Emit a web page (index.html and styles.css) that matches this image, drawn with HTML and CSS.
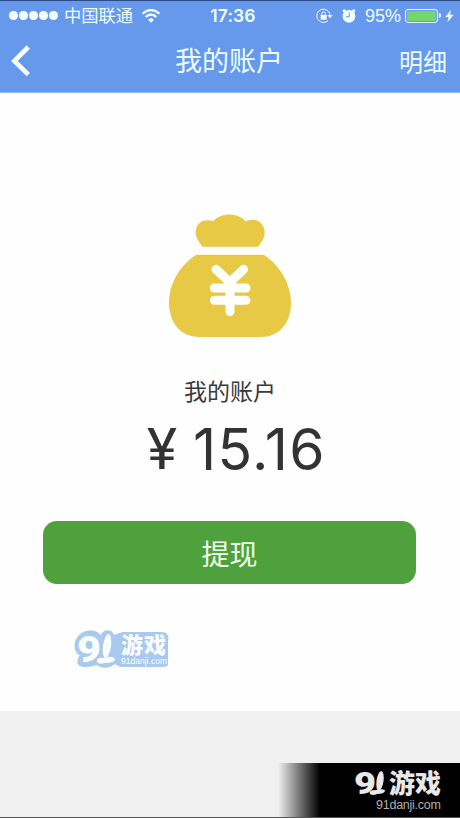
FILE: index.html
```html
<!DOCTYPE html>
<html lang="zh-CN">
<head>
<meta charset="utf-8">
<title>我的账户</title>
<link rel="stylesheet" href="styles.css">
</head>
<body>
<div class="screen">
  <header class="header">
    <div class="status">
      <div class="status-left">
        <span class="dots"><i></i><i></i><i></i><i></i><i></i></span>
        <span class="carrier">中国联通</span>
        <svg class="wifi" width="18" height="14" viewBox="0 0 54 42" fill="none" stroke="#f4ffff" stroke-width="7">
          <path d="M2 14Q27-8 52 14"/><path d="M11 24Q27 9 43 24"/><path d="M18 32Q27 23 36 32L27 41Z" fill="#f4ffff" stroke="none"/>
        </svg>
      </div>
      <span class="time">17:36</span>
      <div class="status-right">
        <svg width="17" height="16" viewBox="0 0 51 48" fill="none" stroke="#f4ffff" stroke-width="3">
          <path d="M36 38A20 20 0 1 1 42 20"/><path d="M34 21h16l-8 10z" fill="#f4ffff" stroke="none"/>
          <rect x="14" y="21" width="18" height="14" fill="#f4ffff" stroke="none"/><path d="M17.500 22v-5a5.500 5.500 0 0 1 11 0v5"/>
        </svg>
        <svg class="alarm" width="14" height="16" viewBox="0 0 42 48">
          <g fill="#f4ffff"><circle cx="21" cy="25" r="19"/><circle cx="7" cy="9" r="5"/><circle cx="35" cy="9" r="5"/></g>
          <path d="M22 14v12h-10" fill="none" stroke="#6699ec" stroke-width="3"/>
        </svg>
        <span class="percent">95%</span>
        <span class="battery"><i></i></span><span class="battery-tip"></span>
        <svg class="bolt" width="9" height="14" viewBox="0 0 27 42"><path d="M18 2L1 24h10L7 40 26 17H15z" fill="#f4ffff"/></svg>
      </div>
    </div>
    <nav class="nav">
      <svg class="back" width="20" height="32" viewBox="0 0 60 96" fill="none" stroke="#f8ffff" stroke-width="14"><path d="M52 6L10 48l42 41"/></svg>
      <h1>我的账户</h1>
      <a class="detail">明细</a>
    </nav>
  </header>
  <main class="account">
    <svg class="bag" width="160" height="150" viewBox="0 0 480 450">
      <g fill="#e7c945">
        <path d="M157 140C142 119 137 108 137 96C137 68 163 53 190 64C213 37 264 37 287 64C315 50 344 68 344 96C344 112 338 124 324 140Z"/>
        <path d="M139 164H341C391 196 423 254 423 309C423 371 386 411 332 411H148C91 411 57 369 57 307C57 252 89 195 139 164Z"/>
      </g>
      <path d="M198 208L240 247L281 208M193 264H288M193 301H288M240 244V335" fill="none" stroke="#fffffb" stroke-width="27" stroke-linecap="round"/>
    </svg>
    <p class="label">我的账户</p>
    <p class="amount"><span class="yen">¥</span><span class="sum">15.16</span></p>
    <button class="withdraw">提现</button>
  </main>
  <footer class="bottom"></footer>
  <div class="stamp">
    <svg width="104" height="48" viewBox="0 0 104 48">
      <path class="stamp-back" d="M16 6C25 4 29 8 31 11Q34 3 41 6L44 10L53 7H91Q99 7 97 15V38Q97 40 93 40H51L45 37Q35 44 27 38Q13 42 9 38Q7 35 11 29Q4 26 6 16Q8 9 16 6Z"/>
      <g class="stamp-face">
        <text class="nine" x="7" y="36" textLength="24" lengthAdjust="spacingAndGlyphs">9</text>
        <ellipse cx="37" cy="20" rx="4" ry="12" transform="rotate(8 37 20)"/><path d="M27 36Q26 31 34 32Q43 29 45 33Q45 37 35 37Q29 39 27 36Z"/>
        <text class="game" x="51" y="27" textLength="45">游戏</text>
        <text class="site" x="51" y="38" textLength="46" lengthAdjust="spacingAndGlyphs">91danji.com</text>
      </g>
    </svg>
  </div>
  <div class="brand">
    <svg width="184" height="54" viewBox="0 0 184 54">
      <g fill="#e8e8e8">
        <text class="brand-nine" x="78" y="31" textLength="22" lengthAdjust="spacingAndGlyphs">9</text>
        <ellipse cx="104" cy="18" rx="3.500" ry="10" transform="rotate(8 104 18)"/>
        <path d="M94 31Q92 27 100 27Q109 25 109 28Q108 31 101 31Q97 33 94 31Z"/>
        <text class="brand-game" x="113" y="30" textLength="52">游戏</text>
      </g>
      <text class="brand-site" x="100" y="46" textLength="65">91danji.com</text>
    </svg>
  </div>
</div>
</body>
</html>
```
FILE: styles.css
```css
* { box-sizing: border-box; }
body {
  margin: 0;
  font-family: "Liberation Sans", "Noto Sans CJK SC", sans-serif;
}
.screen {
  position: relative;
  display: flex;
  flex-direction: column;
  width: 460px;
  height: 818px;
  overflow: hidden;
  background: #fefefe;
}
.header {
  height: 93px;
  background: #6699ec;
  border-top: 1px solid #2c4a86;
  border-bottom: 1px solid #94b8ed;
  color: #ecfdff;
}
.status {
  display: grid;
  grid-template-columns: 1fr auto 1fr;
  align-items: center;
  height: 29px;
  padding: 0 6px 0 9px;
}
.status-left, .status-right, .dots { display: flex; align-items: center; }
.status-right { justify-content: flex-end; }
.dots { gap: 1.5px; }
.dots i { width: 8.6px; height: 8.6px; border-radius: 50%; background: #f4ffff; }
.carrier { margin-left: 6px; padding-top: 1px; font-size: 17.3px; line-height: 28px; font-weight: 400; }
.wifi { margin-left: 9px; }
.time { padding-left: 3px; font: 600 17.5px/28px Inter, sans-serif; letter-spacing: .1px; }
.alarm { margin-left: 9px; }
.percent { margin-left: 9px; font: 400 18px/28px "Liberation Sans", sans-serif; }
.battery { width: 33px; height: 14px; margin-left: 4px; padding: 1px; border: 1px solid #e9ffff; border-radius: 3px; }
.battery i { display: block; width: 29px; height: 10px; border-radius: 1px; background: #73d56c; }
.battery-tip { width: 2px; height: 5px; margin-left: 1px; background: #e9ffff; border-radius: 0 2px 2px 0; }
.bolt { margin-left: 4px; }
.nav {
  display: grid;
  grid-template-columns: 1fr auto 1fr;
  align-items: center;
  height: 62px;
  padding: 0 13px 0 11px;
}
.nav h1 { margin: 0; padding-top: 2px; font-size: 27px; line-height: 40px; font-weight: 400; }
.detail { justify-self: end; padding-top: 4px; font-size: 24px; line-height: 38px; font-weight: 400; }
.account {
  display: flex;
  flex-direction: column;
  align-items: center;
  height: 618px;
  padding-top: 107px;
}
.label { margin: 25px 0 0; font-size: 23px; line-height: 34px; font-weight: 400; color: #3a3a3a; }
.amount {
  display: flex;
  margin: 7px 0 0 13px;
  font: 400 57px/68px Inter, sans-serif;
  color: #333;
}
.yen { width: 46px; font-family: Roboto, sans-serif; font-weight: 400; }
.sum { letter-spacing: 1.3px; }
.withdraw {
  width: 373px;
  height: 63px;
  margin: 37px 1px 0 0;
  padding: 0;
  border: 0;
  border-radius: 14px;
  background: #4fa13d;
  color: #f0ffea;
  font: 400 28px/60px "Noto Sans CJK SC", sans-serif;
}
.bottom { flex: 1; background: #f0f0f0; border-bottom: 1px solid #555; }
.stamp { position: absolute; left: 70px; top: 626px; width: 104px; height: 48px; }
.stamp svg, .brand svg { display: block; }
.stamp-back { fill: #a9c9ee; stroke: #a9c9ee; stroke-width: 2px; stroke-linejoin: round; }
.stamp-face { fill: #fafdff; }
.nine { font: 900 36px Roboto, sans-serif; }
.game { font: 900 22px "Noto Sans CJK SC", sans-serif; }
.site { font: 400 8.5px "Liberation Sans", sans-serif; }
.brand {
  position: absolute;
  right: 0;
  bottom: 1px;
  width: 184px;
  height: 54px;
  background: linear-gradient(to right, transparent 2px, #000 44px);
}
.brand-nine { font: 900 32px Roboto, sans-serif; }
.brand-game { font: 900 26px "Noto Sans CJK SC", sans-serif; }
.brand-site { font: 12.5px "Liberation Sans", sans-serif; fill: #b0b0b0; }
```
